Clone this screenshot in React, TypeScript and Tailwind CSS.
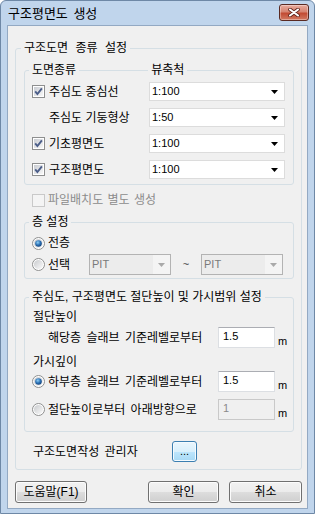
import React from "react";

const FONT = "font-['Liberation_Sans','Noto_Sans_CJK_KR',sans-serif]";

function Check({ checked = false, disabled = false }: { checked?: boolean; disabled?: boolean }) {
  return (
    <svg width="13" height="13" viewBox="0 0 13 13" className="shrink-0">
      <defs>
        <linearGradient id="cbg" x1="0" y1="0" x2="1" y2="1">
          <stop offset="0" stopColor="#c9ccd2" />
          <stop offset="1" stopColor="#f8f8f8" />
        </linearGradient>
      </defs>
      <rect x="0.5" y="0.5" width="12" height="12" fill={disabled ? "#f4f4f4" : "#fff"} stroke={disabled ? "#c9c9c9" : "#8e8f8f"} />
      {!disabled && <rect x="2" y="2" width="9" height="9" fill="url(#cbg)" />}
      {checked && <path d="M3.2 6.4 L5.4 9 L9.9 3.4" fill="none" stroke="#4b5e89" strokeWidth="1.9" />}
    </svg>
  );
}

function Radio({ checked = false }: { checked?: boolean }) {
  return (
    <svg width="13" height="13" viewBox="0 0 13 13" className="shrink-0">
      <defs>
        <linearGradient id="rbg" x1="0" y1="0" x2="1" y2="1">
          <stop offset="0" stopColor="#c8cacd" />
          <stop offset="1" stopColor="#fbfbfb" />
        </linearGradient>
        <radialGradient id="rdot" cx="0.4" cy="0.35" r="0.7">
          <stop offset="0" stopColor="#8fd0f7" />
          <stop offset="0.55" stopColor="#2a6fb3" />
          <stop offset="1" stopColor="#123f77" />
        </radialGradient>
      </defs>
      <circle cx="6.5" cy="6.5" r="6" fill="#fff" stroke="#8e8f8f" />
      <circle cx="6.5" cy="6.5" r="4.6" fill="url(#rbg)" />
      {checked && <circle cx="6.5" cy="6.5" r="3.3" fill="url(#rdot)" />}
    </svg>
  );
}

function Arrow({ color }: { color: string }) {
  return (
    <svg width="7" height="4" viewBox="0 0 7 4" className="shrink-0">
      <polygon points="0,0 7,0 3.5,4" fill={color} />
    </svg>
  );
}

function Combo({ value }: { value: string }) {
  return (
    <div className="flex h-[19px] w-[136px] items-center justify-between border border-[#dcdcdc] bg-white pl-[2px] pr-[6px] text-[11px] leading-none">
      <span>{value}</span>
      <Arrow color="#000" />
    </div>
  );
}

function PitCombo() {
  return (
    <div className="flex h-[21px] w-[82px] border border-[#b3b3b3] bg-[#f4f4f4] text-[11px] leading-none text-[#7a7a7a]">
      <div className="flex flex-1 items-center bg-[#ececec] pl-[2px]">PIT</div>
      <div className="flex w-[17px] items-center justify-center">
        <Arrow color="#a9a9a9" />
      </div>
    </div>
  );
}

function TextBox({ value, disabled = false }: { value: string; disabled?: boolean }) {
  return (
    <div
      className={
        disabled
          ? "h-[21px] w-[57px] border border-[#c9c9c9] bg-[#f0f0f0] pl-[4px] pt-[3px] text-[11px] leading-none text-[#8a8a8a]"
          : "h-[21px] w-[57px] border border-[#dcdfe3] border-t-[#abadb3] bg-white pl-[4px] pt-[3px] text-[11px] leading-none"
      }
    >
      {value}
    </div>
  );
}

function Button({ label, w = "w-[73px]" }: { label: string; w?: string }) {
  return (
    <button
      className={`${w} h-[22px] rounded-[3px] border border-[#707070] bg-[linear-gradient(#f2f2f2,#ebebeb_50%,#dddddd_50%,#cfcfcf)] text-[12px] leading-none shadow-[inset_0_0_0_1px_#fcfcfc]`}
    >
      {label}
    </button>
  );
}

export default function App() {
  return (
    <div className={`${FONT} flex h-[514px] w-[315px] flex-col rounded-t-[6px] border border-[#6e88a6] bg-[#c0d5ec] text-[12px] text-black`}>
      {/* title bar */}
      <div className="flex h-[24px] shrink-0 items-start justify-between">
        <div className="pl-[7px] pt-[5px] text-[13px] leading-[16px] [word-spacing:2px]">구조평면도 생성</div>
        <div className="mr-[5px] mt-[3px] flex h-[17px] w-[30px] items-center justify-center rounded-[3px] border border-[#5a2a22] bg-[linear-gradient(#e9ab9d,#d68471_45%,#c24b33_55%,#d27a62)] shadow-[inset_0_0_0_1px_rgba(255,255,255,0.35)]">
          <svg width="12" height="9" viewBox="0 0 12 9">
            <path d="M2 1.5 L10 7.5 M10 1.5 L2 7.5" stroke="#5b2018" strokeWidth="3.6" strokeLinecap="round" />
            <path d="M2 1.5 L10 7.5 M10 1.5 L2 7.5" stroke="#fff" strokeWidth="2.1" strokeLinecap="round" />
          </svg>
        </div>
      </div>

      {/* client */}
      <div className="mx-[6px] mb-[4px] flex flex-1 flex-col border border-[#93a9c3] bg-[#f0f0f0]">
        <fieldset className="ml-[7px] mr-[6px] mt-[14px] rounded-[3px] border border-[#d5dfe5] pb-[7px] pl-[8px] pr-[7px] pt-[6px]">
          <legend className="-ml-[3px] px-[3px] leading-[16px] [word-spacing:4px]">구조도면 종류 설정</legend>

          {/* 도면종류 / 뷰축척 */}
          <fieldset className="rounded-[3px] border border-[#d5dfe5] pb-[5px] pl-[7px] pr-[6px] pt-[4px]">
            <legend className="-ml-[3px] flex items-center px-[3px] leading-[16px]">
              <span>도면종류</span>
              <span className="mx-[3px] h-px w-[69px] bg-[#d5dfe5]" />
              <span>뷰축척</span>
            </legend>
            <div className="flex flex-col gap-[7px]">
              <div className="flex h-[19px] items-center">
                <div className="flex w-[117px] items-center gap-[4px]">
                  <Check checked />
                  <span className="leading-[16px]">주심도 중심선</span>
                </div>
                <Combo value="1:100" />
              </div>
              <div className="flex h-[19px] items-center">
                <div className="w-[117px] pl-[17px] leading-[16px]">주심도 기둥형상</div>
                <Combo value="1:50" />
              </div>
              <div className="flex h-[19px] items-center">
                <div className="flex w-[117px] items-center gap-[4px]">
                  <Check checked />
                  <span className="leading-[16px]">기초평면도</span>
                </div>
                <Combo value="1:100" />
              </div>
              <div className="flex h-[19px] items-center">
                <div className="flex w-[117px] items-center gap-[4px]">
                  <Check checked />
                  <span className="leading-[16px]">구조평면도</span>
                </div>
                <Combo value="1:100" />
              </div>
            </div>
          </fieldset>

          <div className="mt-[7px] flex h-[16px] items-center gap-[3px] pl-[8px]">
            <Check disabled />
            <span className="leading-[16px] text-[#8c8c8c] [word-spacing:1px]">파일배치도 별도 생성</span>
          </div>

          {/* 층 설정 */}
          <fieldset className="mt-[6px] rounded-[3px] border border-[#d5dfe5] pb-[3px] pl-[7px] pr-[6px] pt-[5px]">
            <legend className="-ml-[3px] px-[3px] leading-[16px]">층 설정</legend>
            <div className="flex h-[16px] items-center gap-[3px]">
              <Radio checked />
              <span className="leading-[16px]">전층</span>
            </div>
            <div className="mt-[3px] flex h-[21px] items-center">
              <div className="flex w-[57px] items-center gap-[3px]">
                <Radio />
                <span className="leading-[16px]">선택</span>
              </div>
              <PitCombo />
              <div className="w-[30px] text-center text-[11px] text-[#444]">~</div>
              <PitCombo />
            </div>
          </fieldset>

          {/* 절단높이 및 가시범위 */}
          <fieldset className="mt-[10px] rounded-[3px] border border-[#d5dfe5] pb-[11px] pl-[7px] pr-[6px] pt-[4px]">
            <legend className="-ml-[3px] px-[3px] leading-[16px]">주심도, 구조평면도 절단높이 및 가시범위 설정</legend>
            <div className="h-[16px] pl-[1px] leading-[16px]">절단높이</div>
            <div className="mt-[2px] flex h-[21px] items-center">
              <div className="w-[186px] pl-[16px] leading-[16px] [word-spacing:2px]">해당층 슬래브 기준레벨로부터</div>
              <TextBox value="1.5" />
              <span className="ml-[3px] self-end text-[11px] leading-[13px]">m</span>
            </div>
            <div className="mt-[6px] h-[16px] pl-[1px] leading-[16px]">가시깊이</div>
            <div className="mt-[1px] flex h-[21px] items-center">
              <div className="flex w-[186px] items-center gap-[3px]">
                <Radio checked />
                <span className="leading-[16px] [word-spacing:2px]">하부층 슬래브 기준레벨로부터</span>
              </div>
              <TextBox value="1.5" />
              <span className="ml-[3px] self-end text-[11px] leading-[13px]">m</span>
            </div>
            <div className="mt-[7px] flex h-[21px] items-center">
              <div className="flex w-[186px] items-center gap-[3px]">
                <Radio />
                <span className="leading-[16px] [word-spacing:2px]">절단높이로부터 아래방향으로</span>
              </div>
              <TextBox value="1" disabled />
              <span className="ml-[3px] self-end text-[11px] leading-[13px]">m</span>
            </div>
          </fieldset>

          <div className="mt-[9px] flex h-[21px] items-center pl-[9px]">
            <div className="w-[139px] leading-[16px] [word-spacing:2px]">구조도면작성 관리자</div>
            <button className="h-[21px] w-[25px] rounded-[3px] border border-[#3c7fb1] bg-[linear-gradient(#eaf6fd,#d9f0fc_50%,#bee6fd_50%,#a7d9f5)] text-[11px] leading-none shadow-[inset_0_0_0_1px_#f4fbff]">
              ...
            </button>
          </div>
        </fieldset>

        <div className="mt-[11px] flex items-center pl-[7px]">
          <Button label="도움말(F1)" w="w-[72px]" />
          <div className="ml-[61px]">
            <Button label="확인" w="w-[71px]" />
          </div>
          <div className="ml-[10px]">
            <Button label="취소" />
          </div>
        </div>
      </div>
    </div>
  );
}
